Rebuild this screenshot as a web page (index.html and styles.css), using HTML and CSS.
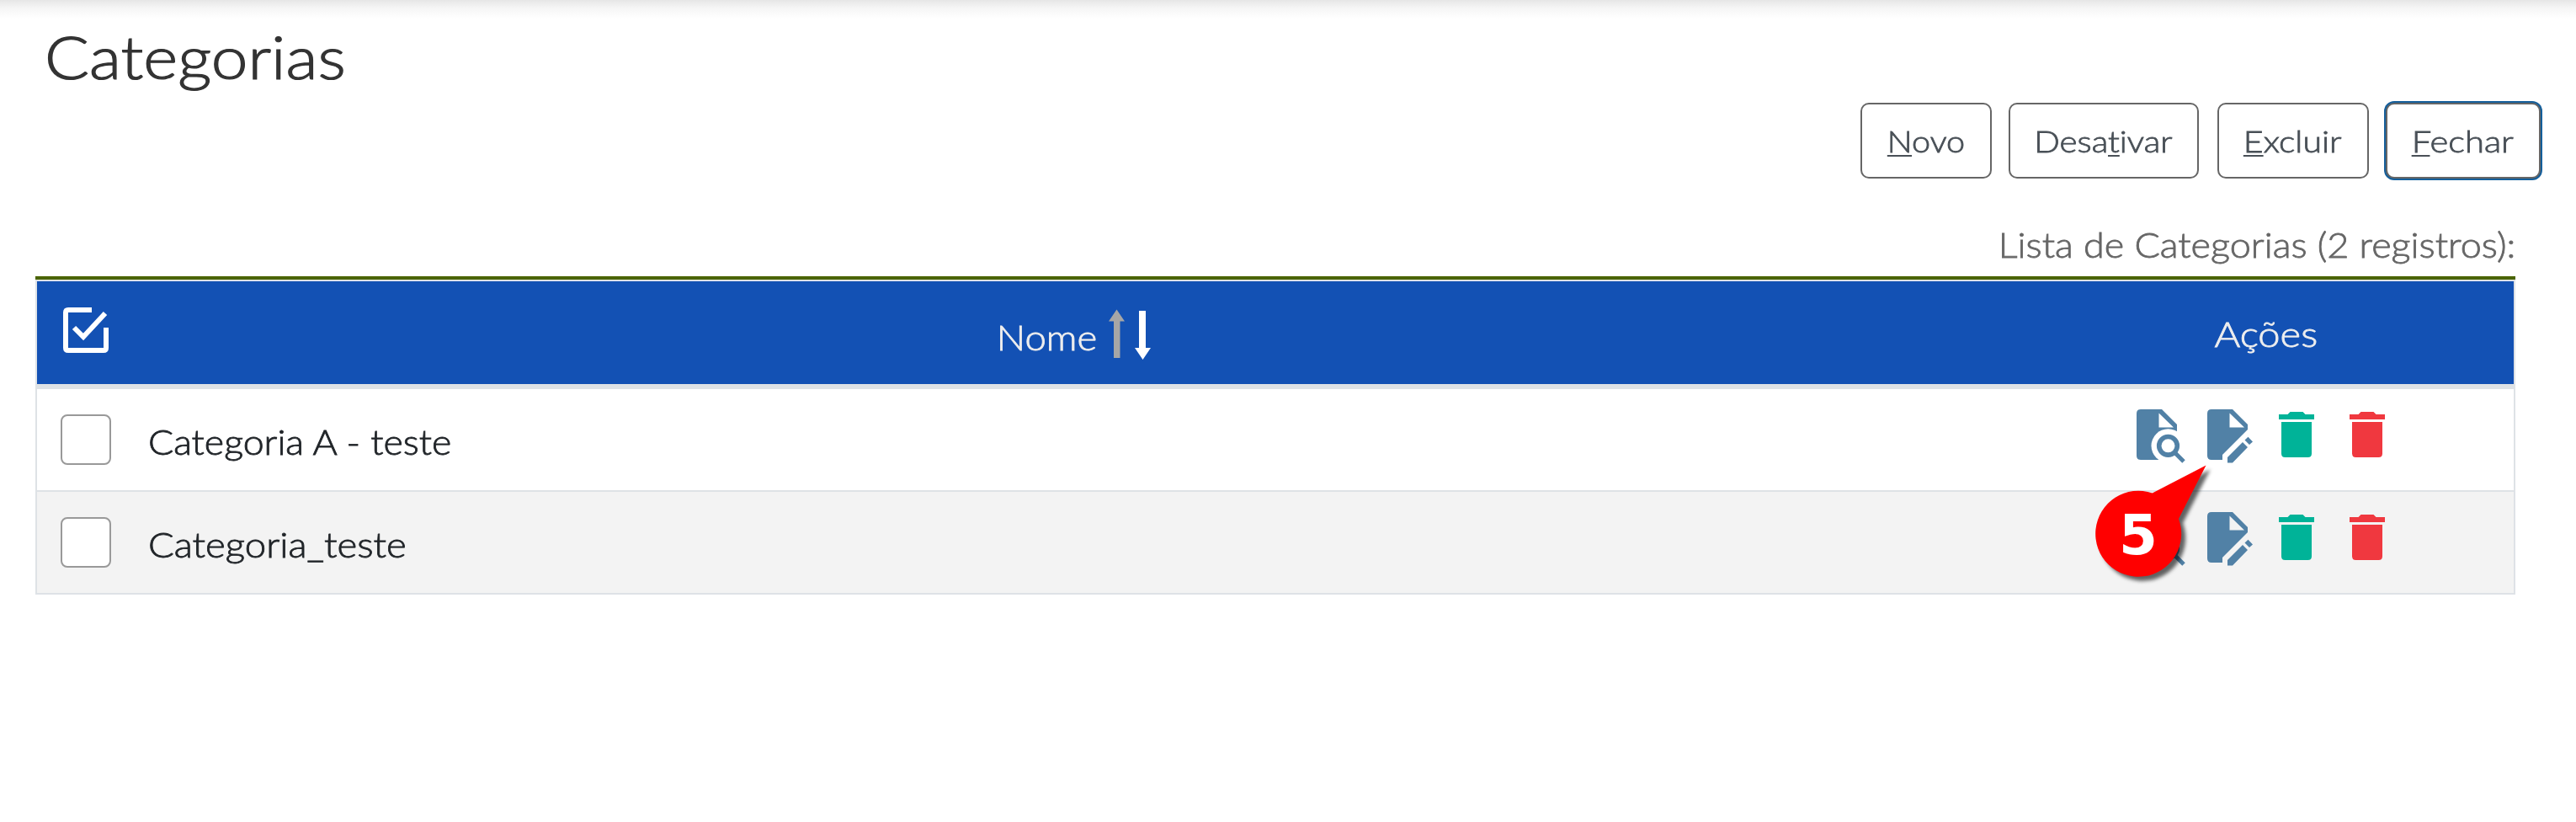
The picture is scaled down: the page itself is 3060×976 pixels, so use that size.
FILE: index.html
```html
<!DOCTYPE html>
<html lang="pt-BR">
<head>
<meta charset="utf-8">
<title>Categorias</title>
<link rel="stylesheet" href="styles.css">
</head>
<body>
<svg class="defs" width="0" height="0" aria-hidden="true">
  <defs>
    <mask id="lens-gap"><rect width="72" height="72" fill="#fff"/><circle cx="49.5" cy="49.3" r="20" fill="#000"/></mask>
    <symbol id="i-view" viewBox="0 0 72 72">
      <path mask="url(#lens-gap)" fill-rule="evenodd" d="M17 6H42L60 24V66H17Q12 66 12 61V11Q12 6 17 6ZM38.5 10.5V27.5H56Z"/>
      <circle cx="49.5" cy="49.3" r="10.8" fill="none" stroke="currentColor" stroke-width="5.6"/>
      <path fill="none" stroke="currentColor" stroke-width="5" d="M57 57L68 68"/>
    </symbol>
    <symbol id="i-edit" viewBox="0 0 72 72">
      <path fill-rule="evenodd" d="M17 6H42L60 24V30L30 60V66H17Q12 66 12 61V11Q12 6 17 6ZM38.5 10.5V27.5H56Z"/>
      <path d="M36 63L54 45L60 51L42 69.5H36ZM56.5 42.5L60.5 38.7L66 44.5L62 48Z"/>
    </symbol>
    <symbol id="i-trash" viewBox="0 0 24 24"><path d="M19 4h-3.5l-1-1h-5l-1 1H5v2h14zM6 7v12.5Q6 21 7.5 21h9Q18 21 18 19.500V7z"/></symbol>
  </defs>
</svg>
<main class="page">
  <h1 class="title"><span class="wide w12">Categorias</span></h1>
  <div class="toolbar">
    <button class="btn novo"><span class="wide mid w10"><u>N</u>ovo</span></button>
    <button class="btn desativar"><span class="wide mid w12">Desa<u>t</u>ivar</span></button>
    <button class="btn excluir"><span class="wide mid w13"><u>E</u>xcluir</span></button>
    <button class="btn fechar"><span class="wide mid w15"><u>F</u>echar</span></button>
  </div>
  <div class="caption"><span class="wide end w7">Lista de Categorias (2 registros):</span></div>
  <section class="table">
    <div class="row head">
      <div class="check">
        <svg class="check-all" viewBox="0 0 56 56"><path d="M35 4H7Q4 4 4 7V49Q4 52 7 52H49Q52 52 52 49V25" fill="none" stroke="#fff" stroke-width="6"/><path d="M14 25L25 36L51 8" fill="none" stroke="#fff" stroke-width="6"/></svg>
      </div>
      <div class="name"><span class="wide end w8">Nome</span>
        <svg class="sort" viewBox="0 0 50 60"><path fill="#a6a6a6" d="M9.500 0.500L19 14.500H13.500V58H6V14.500H0Z"/><path fill="#fff" d="M40.500 60L50 46H44V2H36V46H31Z"/></svg>
      </div>
      <div class="actions"><span class="wide mid w12">Ações</span></div>
    </div>
    <div class="row">
      <div class="check"><span class="box"></span></div>
      <div class="name"><span class="wide w6">Categoria A - teste</span></div>
      <div class="actions">
        <svg class="ico"><use href="#i-view"/></svg><svg class="ico"><use href="#i-edit"/></svg><svg class="ico off"><use href="#i-trash"/></svg><svg class="ico del"><use href="#i-trash"/></svg>
      </div>
    </div>
    <div class="row alt">
      <div class="check"><span class="box"></span></div>
      <div class="name"><span class="wide w8">Categoria_teste</span></div>
      <div class="actions">
        <svg class="ico"><use href="#i-view"/></svg><svg class="ico"><use href="#i-edit"/></svg><svg class="ico off"><use href="#i-trash"/></svg><svg class="ico del"><use href="#i-trash"/></svg>
      </div>
    </div>
  </section>
</main>
<div class="callout">
  <svg viewBox="0 0 160 160"><path fill="red" d="M68.700 33.500L132.500 0.500L100 64A51 51 0 1 1 68.700 33.500Z"/></svg>
  <span>5</span>
</div>
</body>
</html>
```
FILE: styles.css
```css
* { box-sizing: border-box; }
body {
  margin: 0;
  background: #fff;
  color: #212529;
  font-family: Lato, "Open Sans", sans-serif;
  font-weight: 300;
  font-size: 42px;
  font-variant-ligatures: none;
  -webkit-text-stroke: .8px currentColor;
}
.defs { position: absolute; }

/* Light text set slightly extended */
.wide { display: inline-block; transform-origin: 0 50%; }
.mid { transform-origin: 50% 50%; }
.end { transform-origin: 100% 50%; }
.w6 { transform: scaleX(1.064); }
.w7 { transform: scaleX(1.07); }
.w8 { transform: scaleX(1.084); }
.w10 { transform: scaleX(1.1); }
.w12 { transform: scaleX(1.12); }
.w13 { transform: scaleX(1.14); }
.w15 { transform: scaleX(1.16); }

.page {
  height: 976px;
  padding: 34px 40px 0 42px;
  background: linear-gradient(#e6e6e6, #f5f5f5 9px, #fff 22px) no-repeat;
  display: flex;
  flex-direction: column;
}
.title {
  margin: 0;
  padding-left: 11px;
  height: 86px;
  font-size: 70px;
  line-height: 66px;
  font-weight: 300;
  color: #333;
  -webkit-text-stroke: 1.2px currentColor;
}
.toolbar {
  height: 94px;
  padding: 2px 0;
  display: flex;
  justify-content: flex-end;
  gap: 20px;
}
.btn {
  height: 90px;
  padding: 0 1px 0 0;
  border: 2px solid #666;
  border-radius: 10px;
  background: #fff;
  color: #495057;
  font: 300 36px/40px Lato, sans-serif;
  font-variant-ligatures: none;
  white-space: nowrap;
}
.btn u { text-decoration-thickness: 2px; text-underline-offset: 3px; }
.novo { width: 156px; }
.desativar { width: 226px; }
.excluir { width: 180px; margin-left: 2px; }
.fechar { width: 184px; margin-right: 2px; box-shadow: 0 0 0 2px #155f9b; }
.caption {
  height: 114px;
  padding: 51px 32px 0 0;
  line-height: 50px;
  text-align: right;
  color: #666;
}
.table {
  width: 2946px;
  border-top: 4px solid #4a6400;
}
.row {
  height: 122px;
  display: grid;
  grid-template-columns: 112px 2242px 588px;
  border: 2px solid #dee2e6;
  border-top: 0;
}
.alt { background: #f3f3f3; }
.head {
  height: 130px;
  border-top: 2px solid #dee2e6;
  border-bottom: 6px solid #dee2e6;
  background: #1351b4;
  color: #eee;
}
.check { padding: 30px 0 0 28px; }
.check-all { display: block; width: 56px; height: 56px; margin-left: 2px; }
.box {
  display: block;
  width: 60px;
  height: 60px;
  border: 2px solid #999;
  border-radius: 8px;
  background: #fff;
}
.name {
  padding: 4px 0 0 20px;
  display: flex;
  align-items: center;
  line-height: 50px;
}
.head .name { justify-content: center; padding: 10px 0 0 6px; gap: 14px; }
.sort { width: 50px; height: 60px; margin-top: -7px; }
.actions {
  padding: 18px 0 0 128px;
  display: flex;
  color: #5181a6;
  fill: currentColor;
}
.head .actions { padding: 2px 0 0; color: #eee; align-items: center; justify-content: center; }
.ico { width: 72px; height: 72px; margin-right: 12px; }
.off { color: #00b398; margin-left: -2px; }
.del { color: #f0383f; }
.callout {
  position: absolute;
  left: 2488px;
  top: 552px;
  width: 160px;
  height: 160px;
}
.callout svg { display: block; width: 160px; height: 160px; filter: drop-shadow(5px 5px 2px rgba(0, 0, 0, .6)); }
.callout span {
  position: absolute;
  left: 29px;
  top: 46px;
  font: bold 66px/76px "DejaVu Sans", sans-serif;
  color: #fff;
  -webkit-text-stroke: 0;
}
```
